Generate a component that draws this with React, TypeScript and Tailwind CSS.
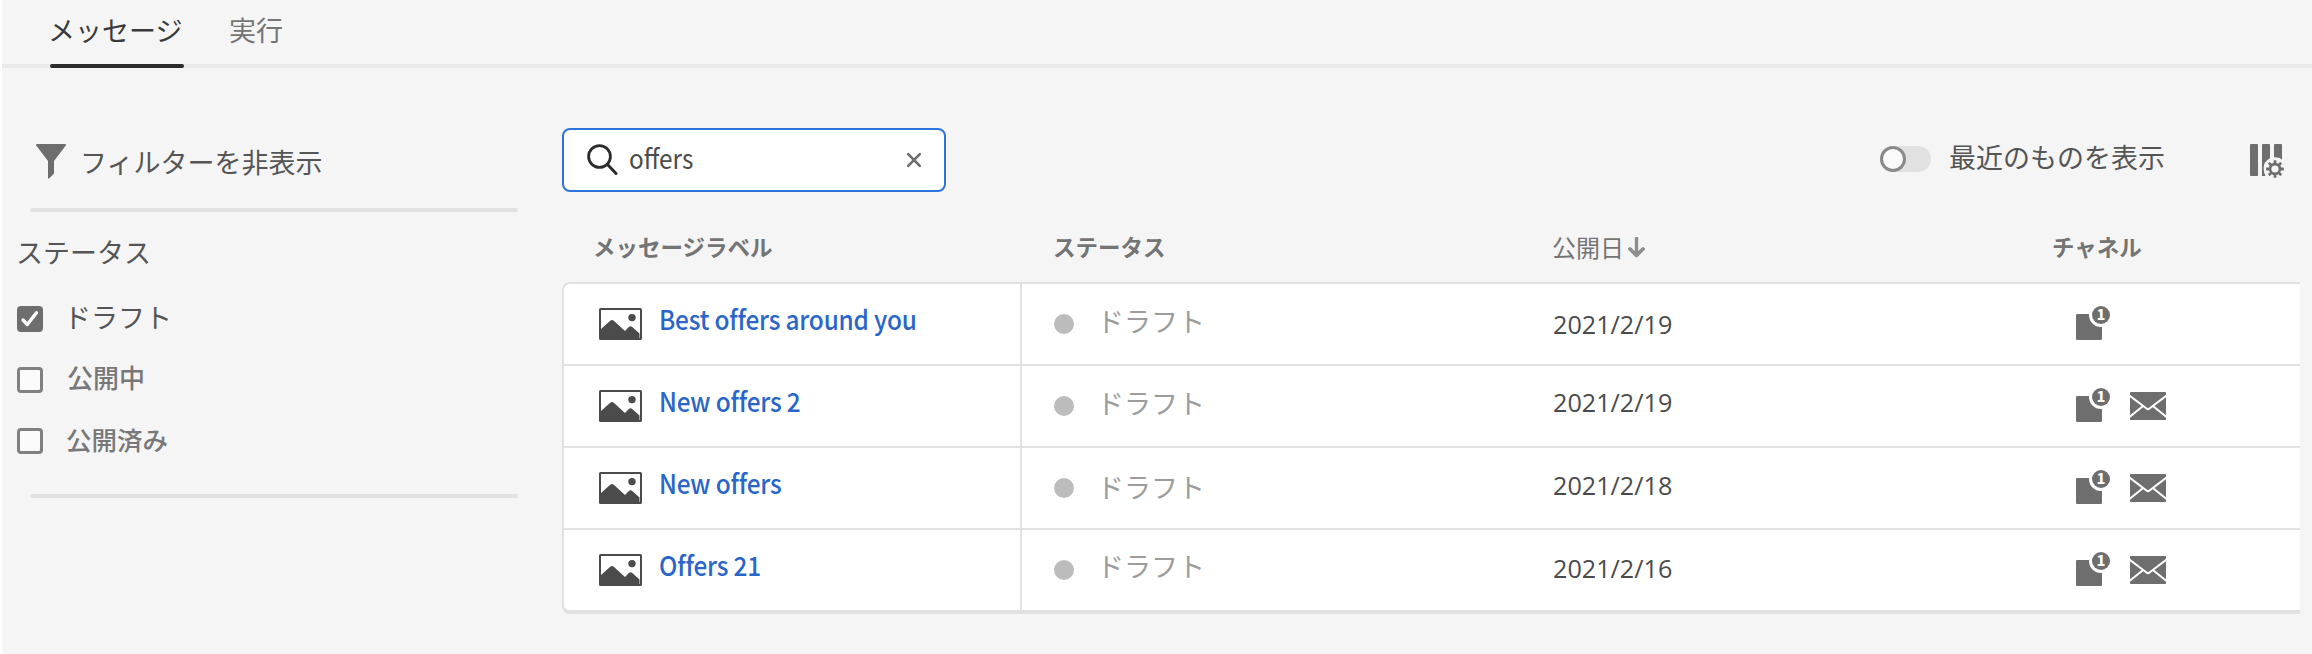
import React from "react";

type Message = {
  label: string;
  date: string;
  email: boolean;
  statusPad: string;
  datePad: string;
};

const messages: Message[] = [
  { label: "Best offers around you", date: "2021/2/19", email: false, statusPad: "pt-[21px]", datePad: "pt-[24px]" },
  { label: "New offers 2", date: "2021/2/19", email: true, statusPad: "pt-[21px]", datePad: "pt-[20px]" },
  { label: "New offers", date: "2021/2/18", email: true, statusPad: "pt-[23px]", datePad: "pt-[21px]" },
  { label: "Offers 21", date: "2021/2/16", email: true, statusPad: "pt-[20px]", datePad: "pt-[22px]" },
];

function FilterIcon() {
  return (
    <svg width="31" height="35" viewBox="0 0 31 35" fill="#6e6e6e">
      <path d="M1 0H29a1 1 0 0 1 .8 1.6L18 17V29.500l-5 5a.7.7 0 0 1-1-.6V17L.2 1.600A1 1 0 0 1 1 0Z" />
    </svg>
  );
}

function SearchIcon() {
  return (
    <svg width="32" height="32" viewBox="0 0 32 32" fill="none" stroke="#2c2c2c" strokeLinecap="round">
      <circle cx="13.500" cy="12.500" r="10.900" strokeWidth="2.800" />
      <path d="M21.500 20.500 30 29.500" strokeWidth="3" />
    </svg>
  );
}

function ClearIcon() {
  return (
    <svg width="16" height="16" viewBox="0 0 16 16" stroke="#6e6e6e" strokeWidth="2.600" strokeLinecap="round">
      <path d="M2.200 2.200 13.800 13.800M13.800 2.200 2.200 13.800" />
    </svg>
  );
}

function ColumnSettingsIcon() {
  const teeth = [0, 45, 90, 135, 180, 225, 270, 315];
  return (
    <svg width="36" height="36" viewBox="0 0 36 36">
      <g fill="#6e6e6e">
        <rect x="0" y="0" width="8" height="32" rx="0.800" />
        <rect x="12" y="0" width="8" height="32" rx="0.800" />
        <rect x="24" y="0" width="8" height="20" rx="0.800" />
      </g>
      <circle cx="25" cy="25" r="11.800" fill="#f5f5f5" />
      <path d="M12 31V20L14 20Q12.600 26 15.400 32H12.800A.8.8 0 0 1 12 31Z" fill="#6e6e6e" />
      <circle cx="25" cy="25" r="4.900" fill="none" stroke="#6e6e6e" strokeWidth="2.600" />
      {teeth.map((a) => (
        <rect key={a} x="23.600" y="16.200" width="2.800" height="4" rx="0.500" fill="#6e6e6e" transform={`rotate(${a} 25 25)`} />
      ))}
    </svg>
  );
}

function ImageIcon() {
  return (
    <svg width="43" height="32" viewBox="0 0 43 32">
      <rect x="1" y="1" width="41" height="30" rx="0.600" fill="#fff" stroke="#4b4b4b" strokeWidth="2" />
      <circle cx="33" cy="9.600" r="3.700" fill="#4b4b4b" />
      <path d="M2 21 11.500 12.500Q13 11.400 14.500 12.500L26 23 30 18.800Q31.500 17.500 33 18.800L40.500 25.500V30H2Z" fill="#4b4b4b" />
    </svg>
  );
}

function InAppIcon() {
  return (
    <svg width="35" height="45" viewBox="0 -10 35 45">
      <rect x="0" y="8" width="26" height="26" rx="1.200" fill="#6e6e6e" />
      <circle cx="25" cy="9" r="12" fill="#fff" />
      <circle cx="25" cy="9" r="9" fill="#6e6e6e" />
      <text x="25" y="14" textAnchor="middle" fill="#fff" className="font-['Noto_Sans_CJK_JP',sans-serif] text-[14px] font-black">
        1
      </text>
    </svg>
  );
}

function MailIcon() {
  return (
    <svg width="36" height="28" viewBox="0 0 36 28">
      <rect width="36" height="28" rx="0.800" fill="#6e6e6e" />
      <path d="M-.5 3.500 16.500 16.500Q18 17.800 19.500 16.500L36.500 3.500M-.5 25 12.500 14.500M36.500 25 23.500 14.500" fill="none" stroke="#fff" strokeWidth="2" />
    </svg>
  );
}

function SortArrow() {
  return (
    <svg width="17" height="21" viewBox="0 0 17 21" fill="none" stroke="#8e8e8e" strokeLinecap="round" strokeLinejoin="round">
      <path d="M8.500 1.500V18" strokeWidth="3.400" />
      <path d="M2 12 8.500 18.300 15 12" strokeWidth="3.800" />
    </svg>
  );
}

function Checkbox({ label, checked, className }: { label: string; checked?: boolean; className: string }) {
  return (
    <label className="flex h-[61px] items-start">
      {checked ? (
        <span className="mt-[6px] flex h-[26px] w-[26px] items-center justify-center rounded-[4px] bg-[#6e6e6e]">
          <svg width="20" height="20" viewBox="0 0 20 20" fill="none" stroke="#fff" strokeWidth="3.400" strokeLinecap="round" strokeLinejoin="round">
            <path d="M3 11 7.300 15.500 16.500 3.800" />
          </svg>
        </span>
      ) : (
        <span className="mt-[6px] h-[26px] w-[26px] rounded-[4px] border-[3px] border-[#808080] bg-[#fafafa]" />
      )}
      <span className={className}>{label}</span>
    </label>
  );
}

export default function App() {
  return (
    <div className="flex h-[654px] w-[2312px] flex-col overflow-hidden border-l-2 border-white bg-[#f5f5f5] font-['Noto_Sans_CJK_JP',sans-serif] whitespace-nowrap">
      <nav className="flex h-[68px] border-b-4 border-[#eaeaea] pl-12 text-[27px] leading-[40px]">
        <div className="-mb-1 flex h-[68px] w-[134px] flex-col">
          <span className="-ml-[2px] h-16 pt-[10px] text-[#3a3a3a]">メッセージ</span>
          <span className="h-1 rounded-[2px] bg-[#2c2c2c]" />
        </div>
        <span className="ml-[45px] pt-[10px] text-[#747474]">実行</span>
      </nav>

      <div className="flex flex-1">
        <aside className="w-[560px] text-[27px] leading-[40px] text-[#555555]">
          <div className="flex h-[140px] pl-[34px]">
            <div className="pt-[76px]">
              <FilterIcon />
            </div>
            <span className="ml-[13px] pt-[74px]">フィルターを非表示</span>
          </div>
          <div className="ml-[28px] h-1 w-[488px] rounded-[2px] bg-[#e1e1e1]" />
          <div className="pl-[15px]">
            <div className="-ml-px h-[88px] pt-[20px]">ステータス</div>
            <Checkbox label="ドラフト" checked className="ml-[21px] -mt-[3px]" />
            <Checkbox label="公開中" className="ml-[24px] -mt-[4px] text-[26px] font-medium text-[#787878]" />
            <Checkbox label="公開済み" className="ml-[23px] -mt-[3px] text-[25.500px] font-medium text-[#787878]" />
          </div>
          <div className="ml-[28px] mt-[11px] h-1 w-[488px] rounded-[2px] bg-[#e1e1e1]" />
        </aside>

        <main className="w-[1738px] pt-[60px]">
          <div className="flex h-16 items-start justify-between">
            <div className="flex h-16 w-[384px] items-center rounded-lg border-2 border-[#2d73de] bg-white pl-[22px] pr-[22px]">
              <SearchIcon />
              <span className="mb-[4px] ml-[11px] w-[120px] origin-left scale-x-[0.9] text-[27px] leading-[40px] text-[#4b4b4b]">offers</span>
              <span className="ml-auto">
                <ClearIcon />
              </span>
            </div>
            <div className="flex w-[420px] pt-[16px]">
              <div className="mt-[2px] h-[26px] w-[51px] rounded-full bg-[#e1e1e1]">
                <div className="h-[26px] w-[26px] rounded-full border-[3px] border-[#8a8a8a] bg-[#fafafa]" />
              </div>
              <span className="ml-[18px] -mt-[7px] w-[301px] text-[27px] leading-[40px] text-[#555555]">最近のものを表示</span>
              <ColumnSettingsIcon />
            </div>
          </div>

          <div className="flex h-[90px] pt-[36px] text-[22.500px] font-bold leading-[36px] text-[#747474]">
            <span className="w-[459px] pl-[31px]">メッセージラベル</span>
            <span className="w-[532px] pl-[32px]">ステータス</span>
            <span className="flex w-[499px] pt-px text-[24px] font-normal">
              <span className="-ml-px">公開日</span>
              <span className="ml-[4px] pt-[8px]">
                <SortArrow />
              </span>
            </span>
            <span>チャネル</span>
          </div>

          <div className="overflow-hidden rounded-l-lg border-y-2 border-l-2 border-b-4 border-[#e1e1e1] bg-white">
            {messages.map((m, i) => (
              <div key={m.label} className={i < messages.length - 1 ? "flex h-[82px] border-b-2 border-[#e1e1e1]" : "flex h-[80px]"}>
                <div className="flex w-[458px] border-r-2 border-[#e1e1e1] pl-[35px]">
                  <div className="pt-[24px]">
                    <ImageIcon />
                  </div>
                  <a className="ml-[17px] origin-left scale-x-[0.92] pt-[15px] text-[26.500px] font-medium leading-[40px] tracking-[-0.200px] text-[#2a66c9]">{m.label}</a>
                </div>
                <div className="flex w-[530px] pl-[32px]">
                  <span className="mt-[30px] h-5 w-5 rounded-full bg-[#bcbcbc]" />
                  <span className={`ml-[23px] text-[27px] leading-[32px] text-[#9c9c9c] ${m.statusPad}`}>ドラフト</span>
                </div>
                <span className={`w-[524px] pl-px font-['Open_Sans',sans-serif] text-[25.200px] leading-[32px] text-[#4b4b4b] ${m.datePad}`}>{m.date}</span>
                <div className="flex">
                  <div className="pt-[12px]">
                    <InAppIcon />
                  </div>
                  {m.email && (
                    <div className="ml-[19px] pt-[26px]">
                      <MailIcon />
                    </div>
                  )}
                </div>
              </div>
            ))}
          </div>
        </main>
      </div>
    </div>
  );
}
